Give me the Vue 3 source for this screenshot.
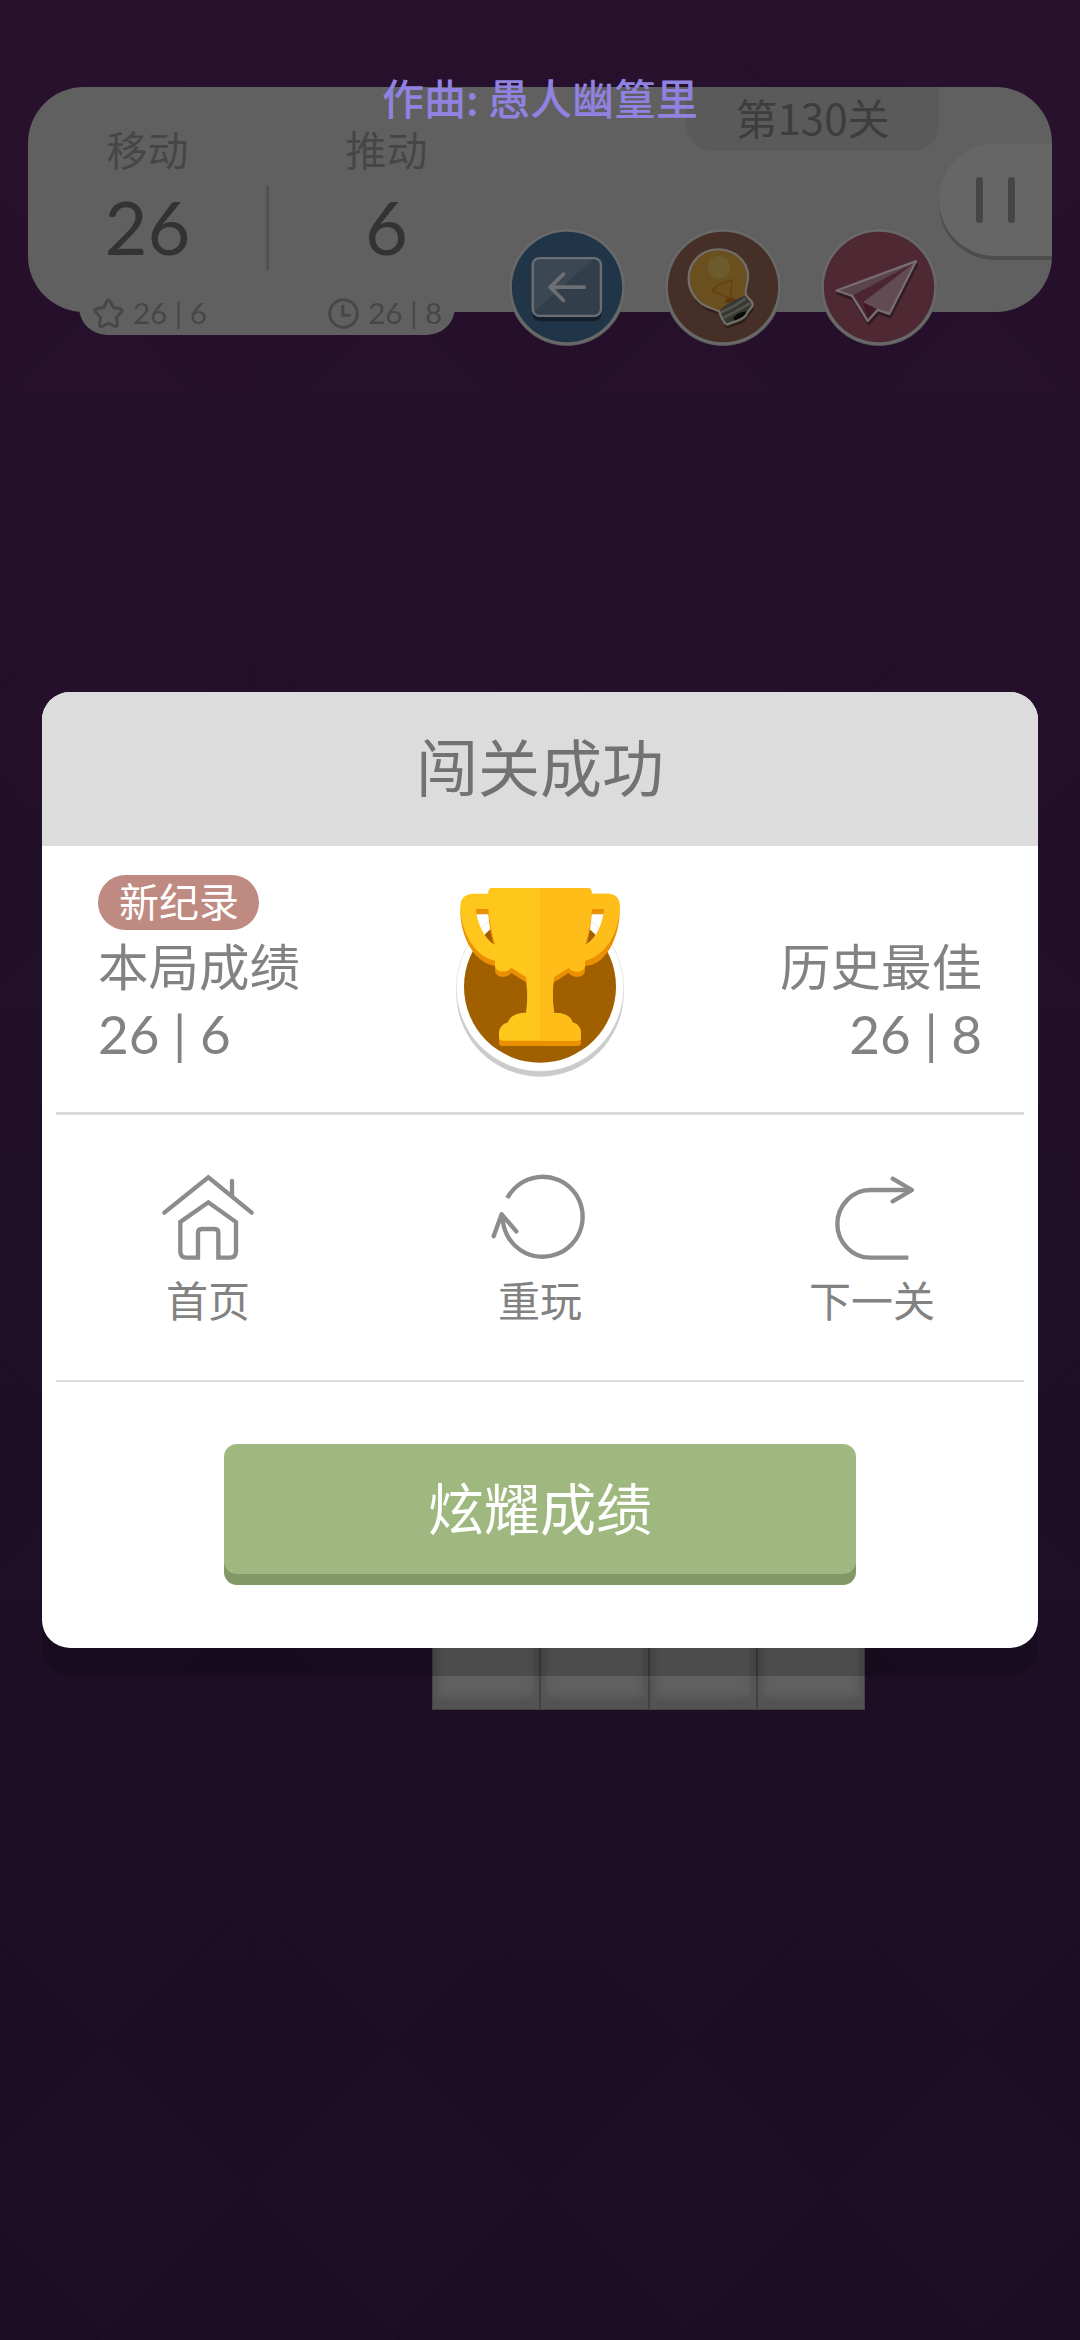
<script setup>
const actions = [
  { label: '首页', icon: 'home' },
  { label: '重玩', icon: 'replay' },
  { label: '下一关', icon: 'next' },
]
const stats = [
  { label: '移动', value: '26' },
  { label: '推动', value: '6' },
]
</script>

<template>
  <main class="screen">
    <svg class="backdrop" width="1080" height="2340" aria-hidden="true">
      <defs>
        <linearGradient id="night" x1="0" y1="0" x2="0" y2="1">
          <stop offset="0" stop-color="#27102c" />
          <stop offset="0.3" stop-color="#230f2a" />
          <stop offset="0.7" stop-color="#1d0e26" />
          <stop offset="1" stop-color="#1b0d24" />
        </linearGradient>
        <pattern id="diamonds" x="248.5" y="297.5" width="291" height="291" patternUnits="userSpaceOnUse">
          <path d="M145.5 0L291 145.5L145.5 291L0 145.5Z" fill="#fff" fill-opacity="0.005" stroke="#000" stroke-opacity="0.07" stroke-width="2" />
        </pattern>
      </defs>
      <rect width="1080" height="2340" fill="url(#night)" />
      <rect width="1080" height="2340" fill="url(#diamonds)" />
    </svg>

    <header class="hud">
      <section class="scores">
        <div class="stats">
          <div v-for="s in stats" :key="s.label" class="stat">
            <span class="stat-label">{{ s.label }}</span>
            <span class="stat-value">{{ s.value }}</span>
          </div>
          <i class="stat-divider"></i>
        </div>
        <div class="records">
          <span class="record">
            <svg width="31" height="31" viewBox="0 0 31 31"><path d="M13.9 3.2Q15.5 0.8 17.1 3.2L20.4 9.6L27.6 10.8Q30.2 11.8 28.4 14L23.5 19.2L24.5 26.3Q24.3 29.2 21.7 28.3L15.5 25.2L9.3 28.3Q6.7 29.2 6.5 26.3L7.5 19.2L2.6 14Q0.8 11.8 3.4 10.8L10.6 9.6Z" /></svg>
            26 | 6
          </span>
          <span class="record">
            <svg width="31" height="31" viewBox="0 0 31 31"><circle cx="15.5" cy="15.5" r="13.8" /><path d="M14.8 7V17.2H23" /></svg>
            26 | 8
          </span>
        </div>
      </section>

      <section class="tools">
        <div class="level">第130关</div>
        <div class="tool-row">
          <svg class="tool" viewBox="24 39 353 353">
            <circle class="ring" cx="200.500" cy="215.500" r="175.500" />
            <circle cx="200.500" cy="215.500" r="165" fill="#203648" />
            <rect x="97" y="137" width="207" height="181" rx="22" fill="#14202c" />
            <rect x="98" y="129" width="204" height="173" rx="20" fill="#36434f" />
            <path d="M282 130Q301 130 301 150V282Q301 301 282 301H118Q106 301 101 290Z" fill="#323f4b" />
            <path d="M100 290V150Q100 130 118 130H282Z" fill="#3b4854" />
            <rect x="98" y="129" width="204" height="173" rx="20" fill="none" stroke="#6b6e72" stroke-width="7" />
            <path d="M252 216H150M190 177L150 216L190 256" fill="none" stroke="#6c6f73" stroke-width="11" stroke-linecap="round" stroke-linejoin="round" />
          </svg>
          <svg class="tool" viewBox="492.500 39 353 353">
            <circle class="ring" cx="669" cy="215.500" r="175.500" />
            <circle cx="669" cy="215.500" r="165" fill="#452f26" />
            <path transform="translate(3 11)" d="M654 103C700 103 744 135 744 184C744 211 732 227 739 241C743 249 757 257 758 268C758 279 741 287 738 300C724 318 700 318 682 328C672 328 664 305 657 289C640 279 617 276 601 262C577 242 566 216 566 190C566 139 607 103 654 103Z" fill="#2c1d18" />
            <path d="M654 103C700 103 744 135 744 184C744 211 732 227 739 241C743 249 757 257 758 268C758 279 741 287 738 300C724 318 700 318 682 328C672 328 664 305 657 289C640 279 617 276 601 262C577 242 566 216 566 190C566 139 607 103 654 103Z" fill="#6a4f1f" />
            <path d="M660 285C682 264 708 250 737 242C743 255 757 258 758 268C758 279 741 287 738 300C724 318 700 318 682 328C672 328 666 304 660 285Z" fill="#373832" />
            <path d="M663 291Q699 276 736 250M671 307Q706 291 750 264" fill="none" stroke="#53544c" stroke-width="8" />
            <path d="M700 308Q713 290 740 288Q741 304 724 312Q708 320 702 316Z" fill="#090909" />
            <circle cx="656" cy="157" r="34" fill="#6e5b2d" />
            <path d="M690 256Q672 235 637 229Q654 202 696 195L690 256" fill="none" stroke="#69400f" stroke-width="5" />
            <path d="M677 264Q675 249 688 247Q702 247 705 255Z" fill="#653509" />
            <path d="M654 103C700 103 744 135 744 184C744 211 732 227 739 241C743 249 757 257 758 268C758 279 741 287 738 300C724 318 700 318 682 328C672 328 664 305 657 289C640 279 617 276 601 262C577 242 566 216 566 190C566 139 607 103 654 103Z" fill="none" stroke="#716d6a" stroke-width="7" />
          </svg>
          <svg class="tool" viewBox="960.500 39 353 353">
            <circle class="ring" cx="1137" cy="215.500" r="175.500" />
            <circle cx="1137" cy="215.500" r="165" fill="#4e2832" />
            <path transform="translate(3 10)" d="M1248 138L1168 296L1133 284L1103 317L1057 242L1010 226Z" fill="#321a21" stroke="#321a21" stroke-width="6" stroke-linejoin="round" />
            <path d="M1248 138L1168 296L1133 284L1103 317L1057 242L1010 226Z" fill="#5b454c" />
            <path d="M1244 142L1057 242L1082 272L1103 317L1133 284L1090 262Z" fill="#4c2732" />
            <path d="M1090 262L1103 317L1133 283Z" fill="#401b25" />
            <path d="M1244 143L1090 261L1168 296Z" fill="#624b53" />
            <path d="M1248 138L1168 296L1133 284L1103 317L1057 242L1010 226Z" fill="none" stroke="#756d70" stroke-width="7" stroke-linejoin="round" />
          </svg>
        </div>
      </section>

      <div class="pause"><i></i><i></i></div>
    </header>

    <div class="board">
      <i v-for="n in 4" :key="n" class="tile"></i>
    </div>

    <p class="lyric">作曲: 愚人幽篁里</p>

    <div class="overlay">
      <article class="dialog">
        <h1 class="dialog-title">闯关成功</h1>

        <section class="results">
          <div class="result">
            <span class="badge">新纪录</span>
            <span class="result-label">本局成绩</span>
            <span class="result-value">26 | 6</span>
          </div>
          <svg class="trophy" viewBox="0 0 660 690">
            <circle cx="330" cy="399" r="251" fill="#cbcbcb" />
            <circle cx="330" cy="383" r="251" fill="#fff" stroke="#ccc" stroke-width="1.500" />
            <circle cx="330" cy="380" r="228" fill="#a06000" />
            <path transform="translate(0 16)" d="M186 84H474Q485 84 486 101H538Q569 104 569 137C570 205 533 299 465 302L465 318C462 337 432 341 416 323L372 351C366 385 368 427 372 458C400 459 422 466 427 487C444 492 453 504 453 520V532Q453 542 443 542H217Q207 542 207 532V520C207 504 218 491 234 487C240 467 262 458 288 458C293 425 293 385 288 351L244 323C228 341 198 337 195 318V302C125 290 91 203 91 137Q92 104 125 101H174Q175 84 186 84ZM137 147C142 190 163 238 196 255C184 220 178 185 175 147ZM485 147C482 185 477 220 464 255C500 238 518 190 523 147Z" fill="#ec9003" fill-rule="evenodd" />
            <path d="M186 84H474Q485 84 486 101H538Q569 104 569 137C570 205 533 286 465 302L465 318C462 337 432 341 416 323L372 351C366 385 368 427 372 458C400 459 422 466 427 487C444 492 453 504 453 520V532Q453 542 443 542H217Q207 542 207 532V520C207 504 218 491 234 487C240 467 262 458 288 458C293 425 293 385 288 351L244 323C228 341 198 337 195 318V302C125 286 91 203 91 137Q92 104 125 101H174Q175 84 186 84ZM137 147C142 190 163 238 196 255C184 220 178 185 175 147ZM485 147C482 185 477 220 464 255C500 238 518 190 523 147Z" fill="#ffc61b" fill-rule="evenodd" />
            <path d="M330 84H474Q485 84 486 101H538Q569 104 569 137C570 205 533 286 465 302L465 318C462 337 432 341 416 323L372 351C366 385 368 427 372 458C400 459 422 466 427 487C444 492 453 504 453 520V532Q453 542 443 542H330ZM485 147C482 185 477 220 464 255C500 238 518 190 523 147Z" fill="#ffbd19" fill-rule="evenodd" />
          </svg>
          <div class="result best">
            <span class="result-label">历史最佳</span>
            <span class="result-value">26 | 8</span>
          </div>
        </section>

        <nav class="actions">
          <div v-for="a in actions" :key="a.label" class="action">
            <svg v-if="a.icon === 'home'" class="action-icon" viewBox="84 66 300 270">
              <path d="M103 188L235 82L365 188M306 93V136" stroke-linecap="round" />
              <path d="M204 323H170Q151 323 151 304V216L235 157L318 216V304Q318 323 299 323H265V249Q265 237 254 237H215Q204 237 204 249V329M265 323V329" />
            </svg>
            <svg v-else-if="a.icon === 'replay'" class="action-icon" viewBox="1080 66 300 270">
              <path d="M1132 144A120 120 0 1 1 1118 202" />
              <path d="M1091 259L1115 193L1159 244" stroke-linecap="round" stroke-linejoin="round" />
            </svg>
            <svg v-else class="action-icon" viewBox="726 216 300 270">
              <path d="M985 473H870C817 473 772 427 772 372S817 270 870 270H995" />
              <path d="M938 236L996 270L938 304" stroke-linecap="round" stroke-linejoin="round" />
            </svg>
            <span>{{ a.label }}</span>
          </div>
        </nav>

        <button class="share">炫耀成绩</button>
      </article>
    </div>
  </main>
</template>

<style>
body {
  margin: 0;
  background: #1d0e26;
}
</style>

<style scoped>
.screen {
  position: relative;
  display: flex;
  flex-direction: column;
  width: 1080px;
  height: 2340px;
  overflow: hidden;
  font-family: 'Noto Sans CJK SC', sans-serif;
}
.backdrop {
  position: absolute;
  inset: 0;
}
.hud {
  position: relative;
  display: flex;
  height: 225px;
  margin: 87px 28px 0;
  border-radius: 56px;
  background: #606060;
}
.scores {
  display: flex;
  flex-direction: column;
  width: 478px;
}
.stats {
  position: relative;
  display: flex;
  flex: none;
  height: 198px;
}
.stat {
  display: flex;
  flex: 1;
  flex-direction: column;
  align-items: center;
  padding-top: 36px;
}
.stat-label {
  height: 50px;
  font-size: 41px;
  line-height: 50px;
  color: #464646;
}
.stat-value {
  height: 80px;
  margin-top: 14px;
  font-family: Lato, sans-serif;
  font-size: 74px;
  line-height: 80px;
  color: #333;
}
.stat-divider {
  position: absolute;
  left: 238px;
  top: 99px;
  width: 3px;
  height: 84px;
  background: #515151;
}
.records {
  display: flex;
  flex: none;
  align-items: center;
  justify-content: space-between;
  box-sizing: border-box;
  width: 376px;
  height: 50px;
  margin: 0 auto;
  padding: 6px 13px 0 14px;
  border-radius: 0 0 28px 28px;
  background: #606060;
}
.record {
  display: flex;
  align-items: center;
  gap: 9px;
  font-family: Lato, sans-serif;
  font-size: 29.5px;
  line-height: 34px;
  color: #474747;
}
.record svg {
  fill: none;
  stroke: #474747;
  stroke-width: 3;
}
.tools {
  display: flex;
  flex-direction: column;
  width: 433px;
}
.level {
  flex: none;
  width: 253px;
  height: 64px;
  margin-left: 180px;
  border-radius: 0 0 26px 26px;
  background: #5a5a5a;
  color: #3d3d3d;
  font-size: 42px;
  line-height: 59px;
  text-align: center;
}
.tool-row {
  display: flex;
  flex: none;
  gap: 38px;
  margin: 77px 0 0 2px;
}
.tool {
  flex: none;
  width: 118px;
  height: 118px;
}
.ring {
  fill: #686868;
  stroke: #555;
  stroke-width: 1.5;
}
.pause {
  display: flex;
  align-items: center;
  justify-content: center;
  gap: 20px;
  box-sizing: border-box;
  width: 113px;
  height: 112px;
  margin-top: 57px;
  border-radius: 56px 0 0 56px;
  background: #666;
  box-shadow: 0 4px 0 #4d4d4d;
}
.pause i {
  width: 7px;
  height: 46px;
  margin-right: 3px;
  margin-left: 2px;
  border-radius: 4px;
  background: #454545;
}
.board {
  position: relative;
  display: flex;
  margin: 1290px 0 0 432px;
}
.tile {
  box-sizing: border-box;
  width: 108.25px;
  height: 108px;
  border: 1px solid #424242;
  background: #606060;
  box-shadow: inset 0 -14px 6px -2px #535353, inset 5px 0 8px #555, inset -5px 0 8px #555;
}
.lyric {
  position: absolute;
  z-index: 2;
  top: 67px;
  left: 0;
  width: 1080px;
  margin: 0;
  color: #8f82e0;
  font-size: 42px;
  font-weight: 500;
  line-height: 60px;
  text-align: center;
}
.overlay {
  position: absolute;
  inset: 0;
  display: flex;
  align-items: center;
  justify-content: center;
}
.dialog {
  width: 996px;
  height: 956px;
  border-radius: 28px;
  background: #fff;
  box-shadow: 0 28px 0 rgba(0, 0, 0, 0.2);
}
.dialog-title {
  height: 154px;
  margin: 0;
  border-radius: 28px 28px 0 0;
  background: #dcdcdc;
  color: #727272;
  font-size: 62px;
  font-weight: 400;
  line-height: 146px;
  text-align: center;
}
.results {
  display: flex;
  justify-content: space-between;
  box-sizing: border-box;
  height: 269px;
  margin: 0 14px;
  padding: 0 42px;
  border-bottom: 3px solid #dcdcdc;
}
.result {
  display: flex;
  flex-direction: column;
  align-items: flex-start;
  width: 240px;
  padding-top: 29px;
  color: #828282;
}
.badge {
  height: 55px;
  padding: 0 20px 0 21px;
  border-radius: 28px;
  background: #be8a82;
  color: #fff;
  font-size: 40px;
  line-height: 51px;
}
.result-label {
  height: 60px;
  margin-top: 4px;
  font-size: 50.5px;
  line-height: 60px;
}
.result-value {
  height: 60px;
  margin-top: 10px;
  font-family: Lato, sans-serif;
  font-size: 53px;
  line-height: 60px;
}
.best {
  align-items: flex-end;
  padding-top: 84px;
}
.trophy {
  width: 220px;
  height: 230px;
  margin-top: 14px;
}
.actions {
  display: flex;
  box-sizing: border-box;
  height: 267px;
  margin: 0 14px;
  border-bottom: 2px solid #dcdcdc;
}
.action {
  display: flex;
  flex: 1;
  flex-direction: column;
  align-items: center;
  padding-top: 57px;
  color: #828282;
  font-size: 42px;
  line-height: 60px;
}
.action:first-child {
  margin-left: -14px;
}
.action:last-child {
  margin-right: -14px;
}
.action-icon {
  flex: none;
  width: 100px;
  height: 90px;
  margin-bottom: 7px;
  fill: none;
  stroke: #8c8c8c;
  stroke-width: 13;
}
.share {
  display: block;
  width: 632px;
  height: 130px;
  margin: 62px auto 0;
  padding: 0 0 6px;
  border: 0;
  border-radius: 13px;
  background: #9fb87f;
  box-shadow: 0 11px 0 #819966;
  color: #fff;
  font-family: inherit;
  font-size: 56px;
  line-height: 124px;
}
</style>
